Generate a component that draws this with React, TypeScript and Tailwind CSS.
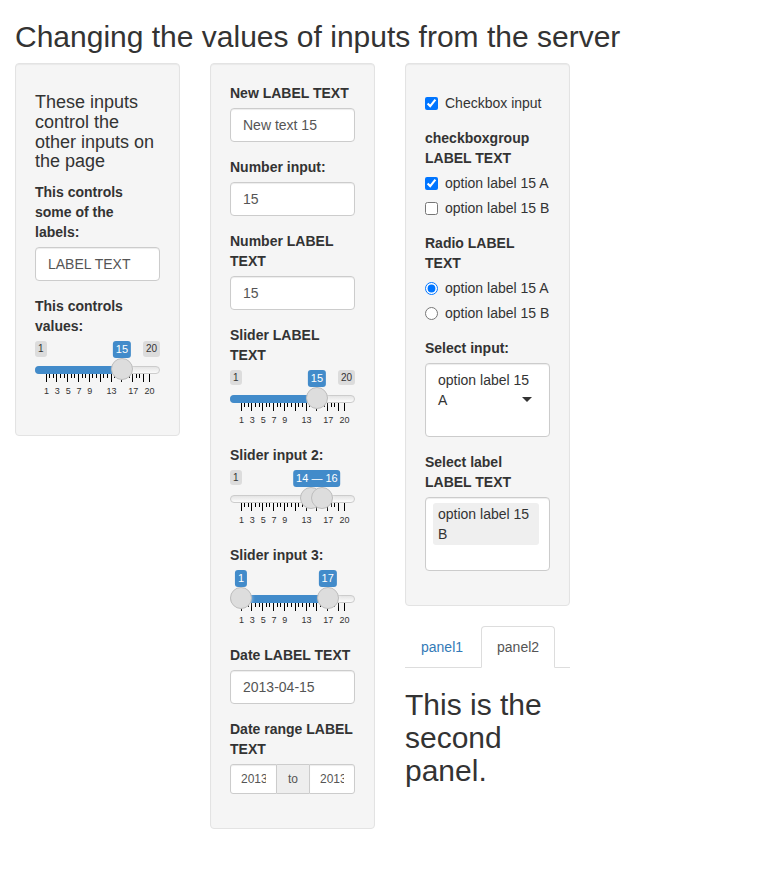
import React from "react";

const TRACK = 103;
const pos = (v: number) => 11 + ((v - 1) / 19) * TRACK;

// big ticks on odd values plus the max, two small ticks in each full gap
const ticks: { v: number; big: boolean }[] = [];
for (let v = 1; v <= 19; v += 2) {
  ticks.push({ v, big: true });
  if (v < 19) {
    ticks.push({ v: v + 2 / 3, big: false });
    ticks.push({ v: v + 4 / 3, big: false });
  }
}
ticks.push({ v: 20, big: true });
const gridLabels = [1, 3, 5, 7, 9, 13, 17, 20];

function Bubble({ at, text }: { at: number; text: string }) {
  return (
    <span
      className="absolute top-0 -translate-x-1/2 whitespace-nowrap rounded-[3px] bg-[#428bca] px-[3px] py-px text-[11px] leading-[1.333] text-white"
      style={{ left: at }}
    >
      {text}
    </span>
  );
}

function Handle({ at }: { at: number }) {
  return (
    <span
      className="absolute top-[17px] h-[22px] w-[22px] rounded-full border border-[#bdbdbd] bg-[#ddd] shadow-[1px_1px_3px_rgba(255,255,255,0.3)]"
      style={{ left: at - 11 }}
    />
  );
}

function Slider({ from, to, showMin = true, showMax = true }: { from: number; to?: number; showMin?: boolean; showMax?: boolean }) {
  const a = pos(from);
  const b = to !== undefined ? pos(to) : 0;
  return (
    <div className="relative h-[60px] w-full">
      {showMin && (
        <span className="absolute left-0 top-0 rounded-[3px] bg-black/10 px-[3px] py-px text-[10px] leading-[1.333] text-[#333]">1</span>
      )}
      {showMax && (
        <span className="absolute right-0 top-0 rounded-[3px] bg-black/10 px-[3px] py-px text-[10px] leading-[1.333] text-[#333]">20</span>
      )}
      <span className="absolute left-0 right-0 top-[25px] h-2 rounded-full border border-[#ccc] bg-gradient-to-b from-[#e4e4e4] to-[#fbfbfb]" />
      {to === undefined ? (
        <span className="absolute left-0 top-[25px] h-2 rounded-l-full bg-[#428bca]" style={{ width: a }} />
      ) : (
        <span className="absolute top-[25px] h-2 bg-[#428bca]" style={{ left: a, width: b - a }} />
      )}
      <div className="absolute bottom-0 left-0 h-[27px] w-full">
        {ticks.map((t) => (
          <span
            key={t.v}
            className={t.big ? "absolute top-0 h-2 w-px bg-black" : "absolute top-0 h-1 w-px bg-black"}
            style={{ left: Math.round(pos(t.v) - 0.5) }}
          />
        ))}
        {gridLabels.map((v) => (
          <span
            key={v}
            className="absolute bottom-[5px] -translate-x-1/2 text-[9px] leading-[9px] text-[#333]"
            style={{ left: pos(v) + 0.5 }}
          >
            {v}
          </span>
        ))}
      </div>
      {to === undefined ? (
        <>
          <Handle at={a} />
          <Bubble at={a} text={String(from)} />
        </>
      ) : to - from < 4 ? (
        <>
          <Handle at={a} />
          <Handle at={b} />
          <Bubble at={(a + b) / 2} text={`${from} — ${to}`} />
        </>
      ) : (
        <>
          <Handle at={a} />
          <Handle at={b} />
          <Bubble at={a} text={String(from)} />
          <Bubble at={b} text={String(to)} />
        </>
      )}
    </div>
  );
}

function Label({ children }: { children: React.ReactNode }) {
  return <label className="mb-[5px] block text-sm font-bold leading-5 text-[#333]">{children}</label>;
}

function TextInput({ value }: { value: string }) {
  return (
    <input
      readOnly
      value={value}
      className="block h-[34px] w-full rounded border border-[#ccc] bg-white px-3 py-1.5 text-sm leading-5 text-[#555] shadow-[inset_0_1px_1px_rgba(0,0,0,0.075)] outline-none"
    />
  );
}

function Well({ children }: { children: React.ReactNode }) {
  return (
    <div className="mb-5 rounded border border-[#e3e3e3] bg-[#f5f5f5] p-[19px] shadow-[inset_0_1px_1px_rgba(0,0,0,0.05)]">
      {children}
    </div>
  );
}

function Check({ label, checked = false, radio = false }: { label: string; checked?: boolean; radio?: boolean }) {
  return (
    <label className="flex items-start gap-[7px] text-sm leading-5 text-[#333]">
      <input
        type={radio ? "radio" : "checkbox"}
        name={radio ? "radio" : undefined}
        defaultChecked={checked}
        className="mx-0 mb-0 mt-1 h-[13px] w-[13px] shrink-0"
      />
      <span>{label}</span>
    </label>
  );
}

export default function App() {
  return (
    <div className="min-h-screen bg-white font-['Liberation_Sans',Arial,sans-serif] text-sm leading-5 text-[#333]">
      <div className="px-[15px]">
        <h2 className="mb-[10px] mt-5 text-[30px] font-normal leading-[1.1]">Changing the values of inputs from the server</h2>
      </div>
      <div className="flex items-start">
        <div className="w-[195px] px-[15px]">
          <Well>
            <h4 className="my-[10px] text-lg leading-[1.1]">These inputs control the other inputs on the page</h4>
            <div className="mb-[15px]">
              <Label>This controls some of the labels:</Label>
              <TextInput value="LABEL TEXT" />
            </div>
            <div className="mb-[15px]">
              <Label>This controls values:</Label>
              <Slider from={15} />
            </div>
          </Well>
        </div>

        <div className="w-[195px] px-[15px]">
          <Well>
            <div className="mb-[15px]">
              <Label>New LABEL TEXT</Label>
              <TextInput value="New text 15" />
            </div>
            <div className="mb-[15px]">
              <Label>Number input:</Label>
              <TextInput value="15" />
            </div>
            <div className="mb-[15px]">
              <Label>Number LABEL TEXT</Label>
              <TextInput value="15" />
            </div>
            <div className="mb-[15px]">
              <Label>Slider LABEL TEXT</Label>
              <Slider from={15} />
            </div>
            <div className="mb-[15px]">
              <Label>Slider input 2:</Label>
              <Slider from={14} to={16} showMax={false} />
            </div>
            <div className="mb-[15px]">
              <Label>Slider input 3:</Label>
              <Slider from={1} to={17} showMin={false} showMax={false} />
            </div>
            <div className="mb-[15px]">
              <Label>Date LABEL TEXT</Label>
              <TextInput value="2013-04-15" />
            </div>
            <div className="mb-[15px]">
              <Label>Date range LABEL TEXT</Label>
              <div className="flex h-[30px] w-full text-xs text-[#555]">
                <input
                  readOnly
                  value="2013-04-15"
                  className="h-[30px] w-[47px] min-w-0 rounded-l-[3px] border border-[#ccc] bg-white px-[10px] text-center text-xs text-[#555] shadow-[inset_0_1px_1px_rgba(0,0,0,0.075)] outline-none"
                />
                <span className="flex h-[30px] w-[32px] items-center justify-center border-y border-[#ccc] bg-[#eee] text-xs">to</span>
                <input
                  readOnly
                  value="2013-04-15"
                  className="h-[30px] min-w-0 flex-1 rounded-r-[3px] border border-[#ccc] bg-white px-[10px] text-center text-xs text-[#555] shadow-[inset_0_1px_1px_rgba(0,0,0,0.075)] outline-none"
                />
              </div>
            </div>
          </Well>
        </div>

        <div className="w-[195px] px-[15px]">
          <Well>
            <div className="mb-[15px] mt-[10px]">
              <Check label="Checkbox input" checked />
            </div>
            <div className="mb-[15px]">
              <Label>checkboxgroup LABEL TEXT</Label>
              <div className="flex flex-col gap-[5px]">
                <Check label="option label 15 A" checked />
                <Check label="option label 15 B" />
              </div>
            </div>
            <div className="mb-[15px]">
              <Label>Radio LABEL TEXT</Label>
              <div className="flex flex-col gap-[5px]">
                <Check label="option label 15 A" checked radio />
                <Check label="option label 15 B" radio />
              </div>
            </div>
            <div className="mb-[15px]">
              <Label>Select input:</Label>
              <div className="relative rounded border border-[#ccc] bg-white px-3 py-1.5 text-sm leading-5 text-[#333] shadow-[inset_0_1px_1px_rgba(0,0,0,0.075)]">
                <div>option label 15 A</div>
                <div className="h-5" />
                <span className="absolute right-[17px] top-1/2 -mt-[3px] h-0 w-0 border-x-[5px] border-t-[5px] border-x-transparent border-t-[#333]" />
              </div>
            </div>
            <div className="mb-[15px]">
              <Label>Select label LABEL TEXT</Label>
              <div className="rounded border border-[#ccc] bg-white px-[7px] pb-[2px] pt-[5px] text-sm leading-5 text-[#333] shadow-[inset_0_1px_1px_rgba(0,0,0,0.075)]">
                <div className="mb-[3px] w-[106px] rounded-[3px] bg-[#efefef] px-[5px] py-px">option label 15 B</div>
                <div className="h-5" />
              </div>
            </div>
          </Well>

          <ul className="flex border-b border-[#ddd]">
            <li className="-mb-px mr-[2px]">
              <span className="block rounded-t border border-transparent px-[15px] py-[10px] leading-5 text-[#337ab7]">panel1</span>
            </li>
            <li className="-mb-px mr-[2px]">
              <span className="block rounded-t border border-[#ddd] border-b-white bg-white px-[15px] py-[10px] leading-5 text-[#555]">panel2</span>
            </li>
          </ul>
          <h2 className="mb-[10px] mt-5 text-[30px] font-normal leading-[1.1]">This is the second panel.</h2>
        </div>
      </div>
    </div>
  );
}
